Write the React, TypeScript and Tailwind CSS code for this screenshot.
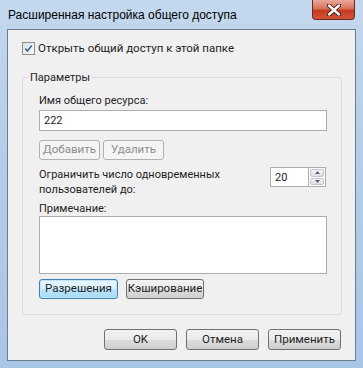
import React from 'react'

const titleFont = { fontFamily: '"Liberation Sans", Arial, sans-serif' }
const uiFont = { fontFamily: 'Roboto, "Liberation Sans", sans-serif' }

function WinButton({ label, w, h = 'h-[20px]', disabled, focused }: { label: string; w: string; h?: string; disabled?: boolean; focused?: boolean }) {
  let cls = 'border-[#707070] bg-[linear-gradient(#f2f2f2_0%,#ebebeb_50%,#dddddd_50%,#cfcfcf_100%)] text-[#1e1e1e]'
  if (disabled) cls = 'border-[#adb2b5] bg-[#f4f4f4] text-[#8d8d8d]'
  if (focused) cls = 'border-[#3c7fb1] bg-[linear-gradient(#eaf6fd_0%,#d9f0fc_50%,#bee6fd_50%,#a7d9f5_100%)] text-[#1e1e1e] shadow-[inset_0_0_0_1px_#c0e4f8]'
  return (
    <div className={`${w} ${h} rounded-[3px] border flex items-center justify-center text-[11.5px] leading-none ${cls}`}>
      {label}
    </div>
  )
}

function CheckBox() {
  return (
    <div className="w-[13px] h-[13px] border border-[#8e8f8f] bg-[linear-gradient(135deg,#dcdcdc,#ffffff)] p-[1px] shrink-0">
      <svg viewBox="0 0 11 11" className="w-full h-full">
        <path d="M1.5 5.5 L4.2 8.6 L9.5 1.8" fill="none" stroke="#3c5f9c" strokeWidth="1.8" />
      </svg>
    </div>
  )
}

function SpinArrow({ up }: { up?: boolean }) {
  return (
    <div className="flex-1 rounded-[2px] border border-[#c4c4c4] bg-[linear-gradient(#f6f6f6,#dedede)] flex items-center justify-center">
      <svg width="5" height="3" viewBox="0 0 5 3">
        <path d={up ? 'M0 3 L2.5 0 L5 3Z' : 'M0 0 L2.5 3 L5 0Z'} fill="#4d6185" />
      </svg>
    </div>
  )
}

export default function App() {
  return (
    <div
      style={uiFont}
      className="w-[363px] h-[368px] flex flex-col px-[7px] pb-[7px] bg-[linear-gradient(180deg,#c4d8ee_0%,#b5cde8_40%,#a9c5e6_100%)] overflow-hidden"
    >
      {/* title bar */}
      <div className="h-[29px] flex items-start relative shrink-0">
        <span style={titleFont} className="text-[12px] leading-[15px] text-black mt-[8px] ml-[1px]">
          Расширенная настройка общего доступа
        </span>
        <div className="absolute right-[1px] top-0 w-[43px] h-[20px] rounded-b-[4px] border border-t-0 border-[#6b2a1f] bg-[linear-gradient(#e9a99a_0%,#d9705a_45%,#c5391f_55%,#d0553b_100%)] flex items-center justify-center">
          <svg width="14" height="12" viewBox="0 0 14 12">
            <path d="M2 1.5 L12 10.5 M12 1.5 L2 10.5" stroke="#3a1208" strokeWidth="4.2" strokeLinecap="round" />
            <path d="M2 1.5 L12 10.5 M12 1.5 L2 10.5" stroke="#ffffff" strokeWidth="2.4" strokeLinecap="round" />
          </svg>
        </div>
      </div>

      {/* client area */}
      <div className="flex-1 bg-[#f0f0f0] border border-[#6c7c8f] flex flex-col text-[11px] leading-[15px] text-[#1e1e1e]">
        <div className="flex items-center gap-[3px] ml-[14px] mt-[11px]">
          <CheckBox />
          <span className="text-[11.5px]">Открыть общий доступ к этой папке</span>
        </div>

        <fieldset className="ml-[14px] mr-[13px] mt-[14px] border border-[#d5dfe5] rounded-[3px] p-0">
          <legend className="ml-[5px] px-[2px] leading-[15px]">Параметры</legend>
          <div className="pl-[16px] pr-[14px] pb-[15px]">
            <div className="mt-[8px]">Имя общего ресурса:</div>
            <div className="mt-[2px] h-[21px] border border-[#abadb3] bg-white flex items-center px-[4px]">222</div>
            <div className="flex gap-[3px] mt-[9px]">
              <WinButton label="Добавить" w="w-[61px]" disabled />
              <WinButton label="Удалить" w="w-[61px]" disabled />
            </div>
            <div className="flex items-start justify-between mt-[7px]">
              <div>
                Ограничить число одновременных
                <br />
                пользователей до:
              </div>
              <div className="flex mt-[0px] mr-[1px]">
                <div className="w-[39px] h-[20px] border border-[#abadb3] bg-white flex items-center px-[4px]">20</div>
                <div className="flex flex-col w-[17px] h-[20px] border border-[#abadb3] border-l-0 bg-white p-[1px] gap-[1px]">
                  <SpinArrow up />
                  <SpinArrow />
                </div>
              </div>
            </div>
            <div className="mt-[4px]">Примечание:</div>
            <div className="h-[58px] border border-[#abadb3] bg-white"></div>
            <div className="flex gap-[8px] mt-[5px]">
              <WinButton label="Разрешения" w="w-[79px]" focused />
              <WinButton label="Кэширование" w="w-[78px]" />
            </div>
          </div>
        </fieldset>

        <div className="flex justify-end gap-[9px] mr-[14px] mt-[14px]">
          <WinButton label="OK" w="w-[73px]" h="h-[21px]" />
          <WinButton label="Отмена" w="w-[73px]" h="h-[21px]" />
          <WinButton label="Применить" w="w-[73px]" h="h-[21px]" />
        </div>
      </div>
    </div>
  )
}
